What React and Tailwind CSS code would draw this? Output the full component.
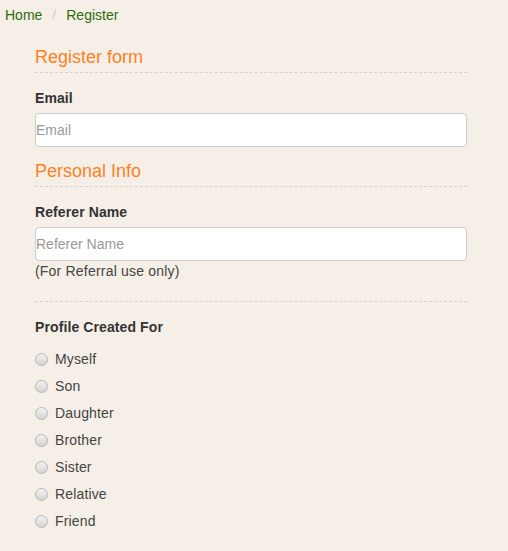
import React from "react";

const options = ["Myself", "Son", "Daughter", "Brother", "Sister", "Relative", "Friend"];

const SectionTitle = ({ children, className = "" }) => (
  <h3
    className={`text-[18px] leading-[20px] text-[#ff7f1f] pb-[5px] border-b border-dashed border-[#d6d1cb] ${className}`}
  >
    {children}
  </h3>
);

export default function App() {
  return (
    <div
      className="w-[508px] h-[551px] bg-[#f6efe8] text-[14px] text-[#333]"
      style={{ fontFamily: '"Liberation Sans", Arial, sans-serif' }}
    >
      {/* breadcrumb */}
      <div className="px-[5px] pt-[5px] leading-[20px] flex items-center">
        <span className="text-[#2e6b0e]">Home</span>
        <span className="mx-[10px] text-[#ccc]">/</span>
        <span className="text-[#2e6b0e]">Register</span>
      </div>

      <div className="ml-[35px] w-[432px]">
        <SectionTitle className="mt-[22px]">Register form</SectionTitle>

        <label className="block mt-[15px] font-bold leading-[20px] tracking-[0.1px]">Email</label>
        <input
          type="text"
          placeholder="Email"
          className="mt-[5px] block w-full h-[34px] px-0 bg-white border border-[#ccc] rounded-[4px] placeholder:text-[#999] outline-none"
        />

        <SectionTitle className="mt-[14px]">Personal Info</SectionTitle>

        <label className="block mt-[15px] font-bold leading-[20px] tracking-[0.1px]">Referer Name</label>
        <input
          type="text"
          placeholder="Referer Name"
          className="mt-[5px] block w-full h-[34px] px-0 bg-white border border-[#ccc] rounded-[4px] placeholder:text-[#999] outline-none"
        />
        <p className="leading-[20px] text-[#444] tracking-[0.2px]">(For Referral use only)</p>

        <div className="mt-[20px] border-t border-dashed border-[#d6d1cb]" />

        <label className="block mt-[15px] font-bold leading-[20px] tracking-[0.1px]">Profile Created For</label>

        <div className="mt-[12px] flex flex-col gap-[7px]">
          {options.map((opt) => (
            <label key={opt} className="flex items-center leading-[20px] text-[#444] tracking-[0.15px]">
              <span className="w-[13px] h-[13px] rounded-full border border-[#b5b5b5] bg-gradient-to-b from-[#f2f2f2] to-[#d4d4d4] mr-[7px]" />
              {opt}
            </label>
          ))}
        </div>
      </div>
    </div>
  );
}
